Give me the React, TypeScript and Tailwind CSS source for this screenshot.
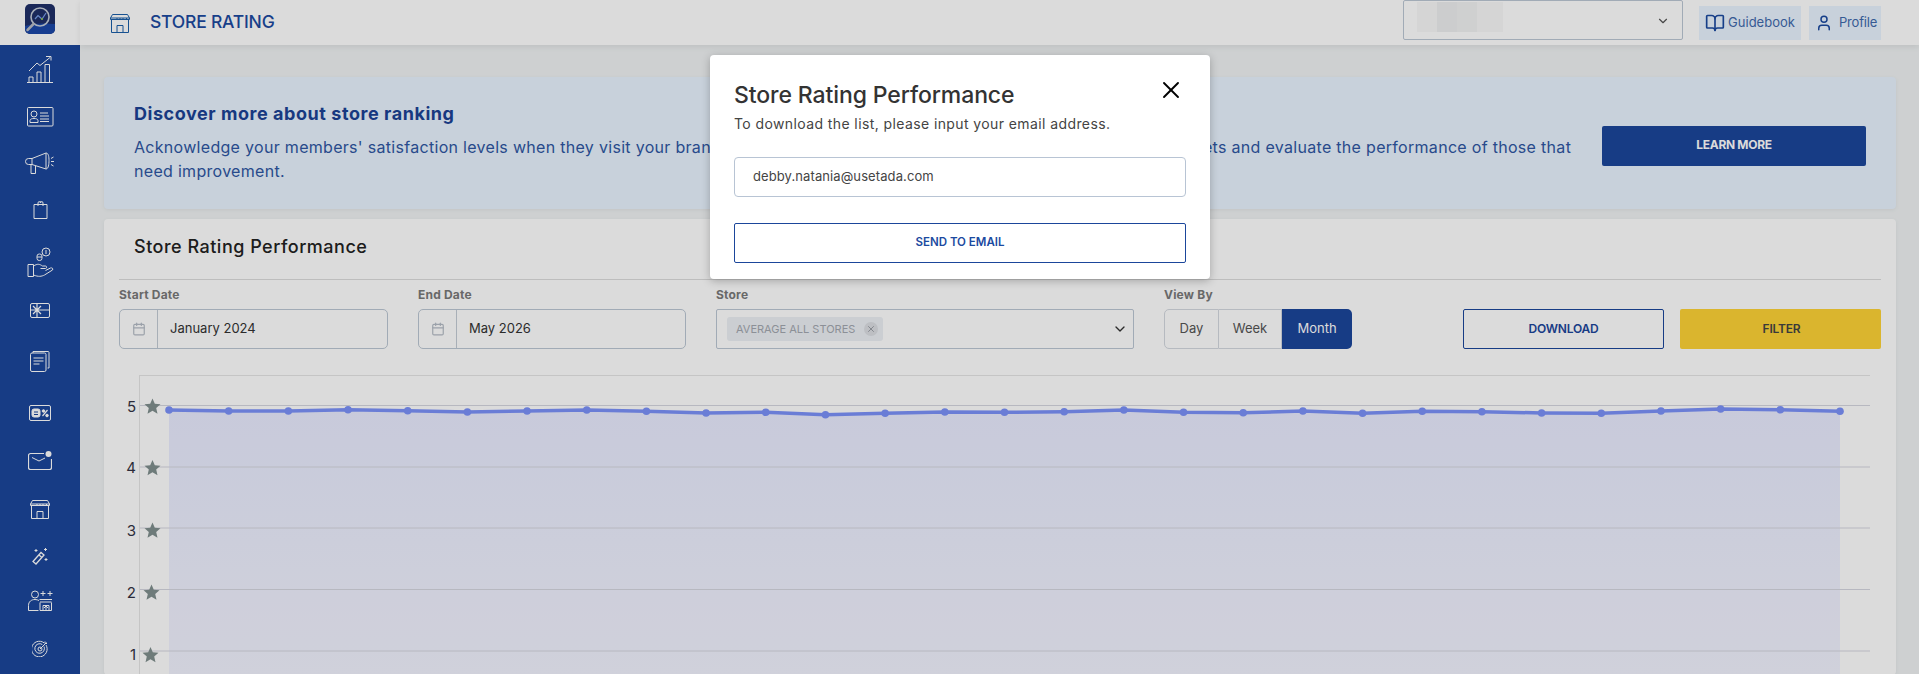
import { X, ChevronDown, BookOpen, User, Calendar } from "lucide-react"

const font = "font-['Inter','Noto_Sans',sans-serif]"

const points = [
  410, 411, 411, 409.7, 410.8, 412, 411, 410, 411.3, 413, 412.3, 414.7, 413.3, 412, 412.3, 411.7, 410, 412.3, 412.7,
  411, 413.3, 411.3, 411.7, 413, 413.3, 411, 409, 409.7, 411.3,
]

const ticks = [
  { label: "5", y: 405.5, star: 152.5, sy: 406.5 },
  { label: "4", y: 467, star: 152.5, sy: 468 },
  { label: "3", y: 528, star: 152.5, sy: 530.5 },
  { label: "2", y: 589.5, star: 151.5, sy: 592.5 },
  { label: "1", y: 651, star: 150.5, sy: 655 },
]

function StoreIcon({ className }: { className?: string }) {
  return (
    <svg viewBox="0 0 20 20" fill="none" stroke="currentColor" strokeWidth="1" className={className}>
      <path d="M2.5 1.5h15l2 3.5v1.5H.5V5z" />
      <path d="M.5 5h19M3.5 6.5v0M7 5v1.5M10 5v1.5M13 5v1.5M16.5 5v1.5" />
      <path d="M1.5 7v12.5h17V7" />
      <path d="M7 19.5v-7h6v7" />
    </svg>
  )
}

function NavIcon({ index }: { index: number }) {
  const line = { fill: "none", stroke: "white", strokeWidth: 1 }
  switch (index) {
    case 0:
      return (
        <svg width="28" height="28" viewBox="0 0 28 28" {...line}>
          <path d="M1 27.5h26M3 27.5v-5.5h4v5.5M11 27.5V17h4v10.500M19 27.500V9.500h4.500v18" />
          <path d="M3 16l8-8 3 2.500 10-8M20 1.500h5v4" />
        </svg>
      )
    case 1:
      return (
        <svg width="27" height="20" viewBox="0 0 27 20" {...line}>
          <rect x="0.500" y="0.500" width="25.500" height="18.500" rx="1" />
          <circle cx="7" cy="7" r="3" />
          <path d="M3 15.500v-2c0-1.500 2-2 4-2s4 .5 4 2v2zM13 6h8M13 9h9M13 12h9M13 14.500h9" />
        </svg>
      )
    case 2:
      return (
        <svg width="30" height="23" viewBox="0 0 30 23" {...line}>
          <path d="M7 6.500l14-5.500v16L7 12.500H3.500a2.800 2.800 0 0 1 0-6zM7 6.500v6M6 13v8.500h4.500V14" />
          <path d="M21 1c2.500 0 3 4 3 7.500S23.500 17 21 17M26 6.500l2.500-1.500M26 9.500h3M26 12.500l2.500 1.500" />
        </svg>
      )
    case 3:
      return (
        <svg width="15" height="18" viewBox="0 0 15 18" {...line}>
          <path d="M1 3.500h13v14H1zM5 5V2a1.500 1.500 0 0 1 3 0M7 2a1.500 1.500 0 0 1 3 0v3" />
        </svg>
      )
    case 4:
      return (
        <svg width="27" height="31" viewBox="0 0 27 31" {...line}>
          <path d="M1 17.500h5.500v12H1zM6.500 19c4-2.500 6-2 9 0h3c1.500 0 1.500 2.500 0 2.500h-5M6.500 28c5 2 8 1.500 11 0l8-5c1-1.500-.5-2.500-2-2l-5 2.500" />
          <circle cx="19" cy="5" r="4" />
          <path d="M19 3v4" />
          <rect x="10" y="7" width="5" height="6.500" rx="2.200" />
          <path d="M10 10h5" />
        </svg>
      )
    case 5:
      return (
        <svg width="20" height="15" viewBox="0 0 20 15" {...line}>
          <rect x="0.500" y="0.500" width="19" height="14" rx="1.500" />
          <path d="M7 .5v14M.5 7h19M3 3l8 8M11 3l-8 8M3 7h8M7 3v8" strokeWidth="1.200" />
        </svg>
      )
    case 6:
      return (
        <svg width="20" height="22" viewBox="0 0 20 22" {...line}>
          <path d="M3 3V1.500h15a1 1 0 0 1 1 1V18h-1.500M3 1.500" />
          <rect x="0.500" y="3" width="15.500" height="18.500" rx="1.500" />
          <path d="M3.500 8h10M3.500 11h10M3.500 14h6" strokeWidth="1.200" />
        </svg>
      )
    case 7:
      return (
        <svg width="22" height="16" viewBox="0 0 22 16" {...line}>
          <rect x="0.500" y="0.500" width="21" height="15" rx="1.500" />
          <rect x="3" y="4" width="8" height="8" rx="2" fill="white" />
          <path d="M5 7h4M5 9.500h4" stroke="#1b469b" />
          <path d="M13.500 11l5-6" strokeWidth="1.200" />
          <circle cx="14.500" cy="6" r="1.300" fill="white" />
          <circle cx="18" cy="10.500" r="1.300" fill="white" />
        </svg>
      )
    case 8:
      return (
        <svg width="24" height="19" viewBox="0 0 24 19" {...line}>
          <path d="M16 2.500H2.500a2 2 0 0 0-2 2v12a2 2 0 0 0 2 2h19a2 2 0 0 0 2-2V8" strokeWidth="1.200" />
          <path d="M4 6.500l7 3.500 6-3" />
          <circle cx="20.500" cy="3" r="3" fill="white" stroke="none" />
        </svg>
      )
    case 9:
      return <StoreIcon className="h-5 w-5 text-white" />
    case 10:
      return (
        <svg width="16" height="17" viewBox="0 0 16 17" {...line}>
          <path d="M1 13.500l8-9 3 2.500-8 9zM7 7l3 2.500" strokeWidth="1.300" />
          <path d="M4 1v3M2.500 2.500h3M13.500 0v3M12 1.500h3M14 10v3M12.500 11.500h3" />
        </svg>
      )
    case 11:
      return (
        <svg width="25" height="21" viewBox="0 0 25 21" {...line}>
          <circle cx="7" cy="4.500" r="3.500" />
          <path d="M.5 20.500v-5c0-4 3-6 6.500-6 1.500 0 3 .5 4 1M.5 20.500h10" />
          <path d="M12.500 3.500h5M15 1v5M19.500 3.500h5M22 1v5" />
          <path d="M12 12.500V20.500h11.500V12.500M11.500 9.500h12.500M12 12h11.500M15 20.500v-5h6v5M18 20v-4l-2 2M18 16l2 2" />
        </svg>
      )
    default:
      return (
        <svg width="17" height="17" viewBox="0 0 17 17" {...line}>
          <path d="M14 5a7.800 7.800 0 1 1-2-2.200" />
          <path d="M12 6.500a4.800 4.800 0 1 1-1.700-2" />
          <circle cx="8" cy="9" r="2" />
          <path d="M8 9l6.500-6.500M13 1.500v2h2" />
        </svg>
      )
  }
}

const navRows = [
  "h-[48px]",
  "h-[48px]",
  "h-[44px]",
  "h-[50px]",
  "h-[54px]",
  "h-[42px]",
  "h-[60px]",
  "h-[44px]",
  "h-[50px]",
  "h-[48px]",
  "h-[46px]",
  "h-[42px]",
  "h-[54px]",
]

function Sidebar() {
  return (
    <aside className="flex w-20 shrink-0 flex-col">
      <div className="flex h-[45px] items-start justify-center bg-white pt-1">
        <svg width="30" height="30" viewBox="0 0 30 30">
          <rect width="30" height="30" rx="5" fill="#1f2f68" />
          <path d="M0 22c8-3 20-3 30-2v5a5 5 0 0 1-5 5H5a5 5 0 0 1-5-5z" fill="#1b47a8" />
          <circle cx="15" cy="13" r="9" fill="none" stroke="#c4ccd8" strokeWidth="1.600" />
          <path d="M8.500 20l-6 6" stroke="#b8bcc4" strokeWidth="2.500" strokeLinecap="round" />
          <path d="M10 15l3-3.500 4 3.500 4-6" fill="none" stroke="#7aa0e8" strokeWidth="1.200" />
          <circle cx="17" cy="15" r="1" fill="#8cc63f" />
        </svg>
      </div>
      <nav className="flex flex-1 flex-col overflow-hidden bg-[#1b469b]">
        {navRows.map((h, i) => (
          <div key={i} className={`flex shrink-0 items-center justify-center ${h}`}>
            <NavIcon index={i} />
          </div>
        ))}
      </nav>
    </aside>
  )
}

function Header() {
  return (
    <header className="relative flex h-[45px] shrink-0 items-center bg-white pr-[38px] pl-[30px] shadow-[0_2px_6px_rgba(0,0,0,0.08)]">
      <StoreIcon className="h-5 w-5 text-[#1b5fa8]" />
      <h1 className="ml-[20px] text-[17.5px] font-medium tracking-[-0.2px] text-[#1b4aa0]">STORE RATING</h1>
      <div className="mt-[-5px] ml-auto flex h-[40px] w-[280px] items-center justify-between rounded-[2px] border border-[#bcc7d4] pr-[10px] pl-[13px]">
        <div className="mt-[-6px] flex h-[30px] w-[86px]">
          <div className="w-[20px] bg-[#f8f9f9]" />
          <div className="w-[20px] bg-[#eeeff0]" />
          <div className="w-[20px] bg-[#f2f3f3]" />
          <div className="w-[26px] bg-[#f9f9f9]" />
        </div>
        <ChevronDown className="mt-[2px] mr-[2px] h-3.5 w-3.5 text-[#555]" />
      </div>
      <button className="ml-[16px] flex h-[34px] w-[102px] items-center justify-center gap-[3px] bg-[#e9f4ff] text-[13px] text-[#3f69ad]">
        <BookOpen className="h-5 w-5 text-[#1b4aa0]" />
        Guidebook
      </button>
      <button className="ml-[8px] flex h-[34px] w-[72px] items-center justify-center gap-[6px] bg-[#e9f4ff] pl-[2px] text-[13px] tracking-[-0.2px] text-[#3f69ad]">
        <User className="h-[18px] w-[18px] text-[#1b4aa0]" />
        Profile
      </button>
    </header>
  )
}

function FieldLabel({ text }: { text: string }) {
  return <div className="h-[29px] pt-[6px] text-[12px] leading-[18px] font-bold tracking-[0.2px] text-[#7a7a7a]">{text}</div>
}

function DateField({ label, value, className }: { label: string; value: string; className: string }) {
  return (
    <div className={className}>
      <FieldLabel text={label} />
      <div className="flex h-[40px] items-center rounded-[5px] border border-[#bcc7d4]">
        <div className="flex h-full w-[38px] items-center justify-center border-r border-[#c4ccd6]">
          <Calendar className="h-[14px] w-[14px] text-[#b5bcc6]" />
        </div>
        <span className="ml-[12px] text-[13px] text-[#333]">{value}</span>
      </div>
    </div>
  )
}

function Filters() {
  return (
    <div className="flex">
      <DateField label="Start Date" value="January 2024" className="w-[269px]" />
      <DateField label="End Date" value="May 2026" className="ml-[30px] w-[268px]" />
      <div className="ml-[30px] w-[418px]">
        <FieldLabel text="Store" />
        <div className="flex h-[40px] items-center justify-between rounded-[2px] border border-[#bcc7d4] pr-[5px] pl-[10px]">
          <div className="flex h-[24px] w-[156px] items-center justify-between rounded-[3px] bg-[#edf0f5] pr-[5px] pl-[9px] text-[11px] whitespace-nowrap text-[#a3a8b0]">
            AVERAGE ALL STORES
            <span className="flex h-[14px] w-[14px] items-center justify-center rounded-full bg-[#dcdfe4]">
              <X className="h-[10px] w-[10px] text-[#8d9299]" />
            </span>
          </div>
          <ChevronDown className="h-4 w-4 text-[#333]" />
        </div>
      </div>
      <div className="ml-[30px] w-[188px]">
        <FieldLabel text="View By" />
        <div className="flex h-[40px] text-[13px]">
          <div className="flex w-[55px] items-center justify-center rounded-l-[5px] border border-[#d4d9e0] text-[#555]">
            Day
          </div>
          <div className="flex w-[63px] items-center justify-center border-y border-r border-[#d4d9e0] text-[#555]">
            Week
          </div>
          <div className="flex w-[70px] items-center justify-center rounded-r-[5px] bg-[#1b469b] text-white">Month</div>
        </div>
      </div>
      <div className="ml-[111px] flex items-end gap-[16px]">
        <button className="h-[40px] w-[201px] rounded-[2px] border border-[#1b469b] text-[12px] font-semibold tracking-[-0.2px] text-[#1b469b]">
          DOWNLOAD
        </button>
        <button className="h-[40px] w-[201px] rounded-[2px] bg-[#fed336] pl-[2px] text-[12px] font-semibold tracking-[-0.2px] text-[#444]">
          FILTER
        </button>
      </div>
    </div>
  )
}

function Chart() {
  const xs = points.map((_, i) => 169 + (i * (1840 - 169)) / 28)
  const line = points.map((y, i) => `${xs[i].toFixed(1)},${y}`).join(" ")
  return (
    <svg viewBox="119 375 1762 300" className="mt-[26px] block h-[300px] w-full">
      <defs>
        <linearGradient id="area" x1="0" y1="0" x2="0" y2="1">
          <stop offset="0" stopColor="#e9ecff" />
          <stop offset="1" stopColor="#f3f4ff" />
        </linearGradient>
      </defs>
      <polygon points={`169,675 ${line} 1840,675`} fill="url(#area)" />
      <path d="M140 375.500H1870M139.500 375V675" stroke="#e6e6e6" strokeWidth="1" fill="none" />
      {ticks.map((t) => (
        <g key={t.label}>
          <line x1="140" x2="1870" y1={t.y} y2={t.y} stroke="#d6d7e0" />
          <text x="136" y={t.sy + 5} textAnchor="end" fontSize="15" fill="#334">
            {t.label}
          </text>
          <path
            transform={`translate(${t.star} ${t.sy})`}
            d="M0-8l2.300 5.300 5.700.5-4.300 3.800 1.300 5.600L0 4.200-5 7.200l1.300-5.600L-8-2.200l5.700-.5z"
            fill="#81908f"
          />
        </g>
      ))}
      <polyline points={line} fill="none" stroke="#7c92fa" strokeWidth="3.500" />
      {points.map((y, i) => (
        <circle key={i} cx={xs[i]} cy={y} r="3.800" fill="#7c92fa" />
      ))}
    </svg>
  )
}

function EmailModal() {
  return (
    <div className="absolute top-[55px] left-[710px] w-[500px] rounded-[4px] bg-white px-[24px] pt-[24px] pb-[16px] shadow-[0_2px_8px_rgba(0,0,0,0.25)]">
      <X className="absolute top-[21px] right-[25px] h-[28px] w-[28px] text-black" strokeWidth={1.6} />
      <h2 className="text-[23px] leading-[32px] font-medium tracking-[-0.1px] text-[#333]">Store Rating Performance</h2>
      <p className="mt-[2px] text-[14px] leading-[21px] tracking-[0.4px] text-[#444]">
        To download the list, please input your email address.
      </p>
      <div className="mt-[23px] flex h-[40px] items-center rounded-[4px] border border-[#b8c4d4] px-[18px] text-[13px] tracking-[0.1px] text-[#444]">
        debby.natania@usetada.com
      </div>
      <button className="mt-[26px] h-[40px] w-full rounded-[2px] border border-[#1b469b] text-[11.5px] font-semibold text-[#1b4aa0]">
        SEND TO EMAIL
      </button>
    </div>
  )
}

export default function App() {
  return (
    <div className={`relative flex h-[674px] overflow-hidden bg-[#f0f3f4] ${font}`}>
      <Sidebar />
      <main className="flex min-w-0 flex-1 flex-col">
        <Header />
        <div className="flex flex-col gap-[10px] pt-[32px] pr-[23px] pl-[24px]">
          <section className="flex h-[132px] items-center rounded-[4px] bg-[#e9f4ff] pr-[30px] pl-[30px] shadow-[0_1px_4px_rgba(0,0,0,0.06)]">
            <div className="mt-[-4px]">
              <h3 className="text-[18px] leading-[27px] font-bold tracking-[0.55px] text-[#1b4295]">
                Discover more about store ranking
              </h3>
              <p className="mt-[8px] text-[16px] leading-[24px] tracking-[0.3px] text-[#2f57a3]">
                Acknowledge your members' satisfaction levels when they visit your branches. See which stores perform
                the best across all of your outlets and evaluate the performance of those that
                <br />
                need improvement.
              </p>
            </div>
            <button className="mt-[5px] ml-auto h-[40px] w-[264px] rounded-[2px] bg-[#1b469b] pb-[2px] text-[12px] font-bold tracking-[-0.3px] text-white">
              LEARN MORE
            </button>
          </section>
          <section className="rounded-[4px] bg-white px-[15px] shadow-[0_1px_4px_rgba(0,0,0,0.06)]">
            <div className="flex h-[61px] items-center border-b border-[#dcdcdc] pb-[6px] pl-[15px]">
              <h3 className="text-[18px] font-medium tracking-[0.5px] text-[#222]">Store Rating Performance</h3>
            </div>
            <Filters />
            <Chart />
          </section>
        </div>
      </main>
      <div className="absolute inset-0 bg-black/14" />
      <EmailModal />
    </div>
  )
}
